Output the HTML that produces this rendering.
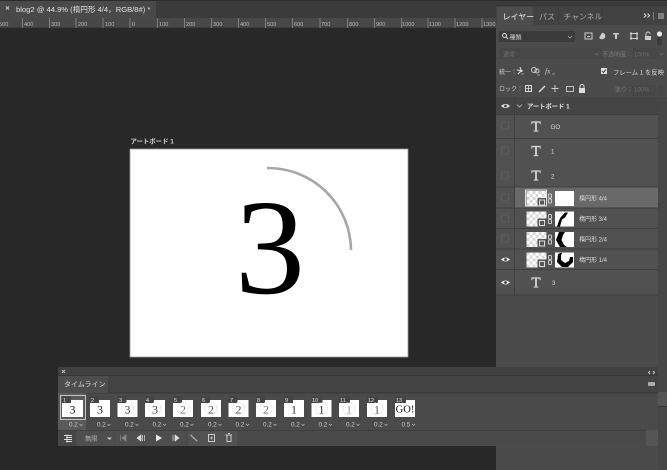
<!DOCTYPE html>
<html lang="ja">
<head>
<meta charset="utf-8">
<title>blog2</title>
<style>
html,body{margin:0;padding:0;width:667px;height:470px;overflow:hidden;background:#282828}
svg{display:block;filter:blur(.35px)}
text{font-family:"Liberation Sans","Noto Sans CJK JP",sans-serif}
</style>
</head>
<body>
<svg width="667" height="470" viewBox="0 0 667 470" xmlns="http://www.w3.org/2000/svg">
<defs>
<pattern id="ck" width="6" height="6" patternUnits="userSpaceOnUse">
<rect width="6" height="6" fill="#fff"/>
<rect width="3" height="3" fill="#d8d8d8"/>
<rect x="3" y="3" width="3" height="3" fill="#d8d8d8"/>
</pattern>
<g id="eye"><path d="M-4.5 0Q0 -4 4.5 0Q0 4 -4.5 0Z" fill="#e6e6e6"/><circle r="1.4" fill="#444"/></g>
<g id="T"><path d="M-4.500 -5H4.500V-2.500H3.700V-4H0.800V4.200H2.200V5H-2.200V4.200H-0.800V-4H-3.700V-2.500H-4.500Z" fill="#d4d4d4" stroke="#d4d4d4" stroke-width="0.3"/></g>
<g id="lt">
<rect x="0" y="0" width="20" height="15" fill="url(#ck)"/>
<rect x="11" y="7" width="9" height="9" fill="#555"/>
<rect x="13" y="9" width="5" height="5" fill="none" stroke="#ddd"/>
<rect x="22" y="3" width="3" height="4" rx="1" fill="none" stroke="#ccc"/>
<rect x="22" y="8" width="3" height="4" rx="1" fill="none" stroke="#ccc"/>
</g>
</defs>

<rect width="667" height="470" fill="#282828"/>

<!-- top tab bar -->
<rect y="0" width="667" height="1" fill="#2c2c2c"/>
<rect y="1" width="667" height="17" fill="#3b3b3b"/>
<rect x="0" y="1" width="156" height="17" fill="#494949"/>
<path d="M6 6.500l3 3m0-3l-3 3" stroke="#bbb" stroke-width="1.200"/>
<text x="16" y="12" font-size="7.600" fill="#e2e2e2">blog2 @ 44.9% (楕円形 4/4，RGB/8#) *</text>

<!-- ruler -->
<rect y="18" width="667" height="10" fill="#484848"/>
<rect y="27.500" width="667" height="0.700" fill="#303030"/>
<g stroke="#8c8c8c" stroke-width="0.800">
<path d="M22.500 18V28M49.500 18V28M76 18V28M103 18V28M130 18V28M157.500 18V28M184.500 18V28M211.500 18V28M238.500 18V28M265.500 18V28M292.500 18V28M320 18V28M347.500 18V28M374.500 18V28M401.500 18V28M428 18V28M455 18V28M482 18V28"/>
</g>
<g font-size="5.600" fill="#b8b8b8">
<text x="-1" y="26">500</text><text x="24" y="26">400</text><text x="51" y="26">300</text><text x="78" y="26">200</text><text x="105" y="26">100</text><text x="132" y="26">0</text><text x="159" y="26">100</text><text x="186" y="26">200</text><text x="213" y="26">300</text><text x="240" y="26">400</text><text x="267" y="26">500</text><text x="294" y="26">600</text><text x="321" y="26">700</text><text x="349" y="26">800</text><text x="376" y="26">900</text><text x="402" y="26">1000</text><text x="429" y="26">1100</text><text x="456" y="26">1200</text><text x="483" y="26">1300</text>
</g>

<!-- artboard -->
<text x="130.500" y="143.500" font-size="6.400" font-weight="bold" fill="#d6d6d6">アートボード 1</text>
<rect x="130" y="149" width="278" height="208" fill="#fff" stroke="#9a9a9a" stroke-width="0.800"/>
<text x="270" y="293" text-anchor="middle" font-size="136" fill="#000" style="font-family:'Liberation Serif',serif" transform="translate(270 0) scale(1.030 1) translate(-270 0)">3</text>
<path d="M267 168A83 83 0 0 1 351 250" fill="none" stroke="#a6a6a6" stroke-width="2.600"/>

<!-- right panel -->
<rect x="496" y="5" width="171" height="465" fill="#4b4b4b"/>
<rect x="496" y="5" width="171" height="1" fill="#343434"/>
<rect x="496" y="6" width="171" height="19" fill="#424242"/>
<rect x="497" y="7" width="36" height="18" fill="#4d4d4d"/>
<path d="M558.500 8V25M602 8V25" stroke="#383838" stroke-width="0.800"/>
<text x="502.500" y="19.500" font-size="8" fill="#ececec">レイヤー</text>
<text x="539" y="19.500" font-size="8" fill="#a8a8a8">パス</text>
<text x="563.500" y="19.500" font-size="7.800" fill="#a8a8a8">チャンネル</text>
<path d="M644 13.500l2 2-2 2M647.500 13.500l2 2-2 2" fill="none" stroke="#ddd" stroke-width="1"/>
<path d="M653.500 12V20" stroke="#8c8c8c" stroke-width="0.800"/>
<path d="M658 14H664M658 16H664M658 18H664" stroke="#bbb" stroke-width="1"/>

<!-- search row -->
<rect x="499" y="31" width="76" height="11" rx="1" fill="#3b3b3b"/>
<circle cx="504.500" cy="35.500" r="2" fill="none" stroke="#ddd" stroke-width="1"/>
<path d="M506 37l2 2" stroke="#ddd" stroke-width="1"/>
<text x="509.500" y="39.500" font-size="6" fill="#cfcfcf">種類</text>
<path d="M568 36l2 2 2-2" fill="none" stroke="#aaa" stroke-width="0.800"/>
<rect x="585" y="33" width="7" height="6" fill="none" stroke="#ccc" stroke-width="1"/>
<path d="M587 36.500H590" stroke="#ccc"/>
<circle cx="602" cy="36" r="3.300" fill="#ccc"/>
<path d="M602 32.700A3.300 3.300 0 0 0 599 38Z" fill="#4b4b4b"/>
<path d="M613 33H619V34.500H617V39H615V34.500H613Z" fill="#ccc"/>
<rect x="631" y="33.500" width="6" height="5" fill="none" stroke="#ccc"/>
<path d="M630 32.500h2v2h-2zM636 32.500h2v2h-2zM630 37.500h2v2h-2zM636 37.500h2v2h-2z" fill="#ccc"/>
<rect x="645" y="36" width="6" height="4" fill="#ccc"/>
<path d="M646 36v-2a2 2 0 0 1 4 0" fill="none" stroke="#ccc"/>
<rect x="657" y="36" width="5" height="9" rx="2.500" fill="#3a3a3a"/>
<circle cx="659.500" cy="34" r="2.600" fill="#e8e8e8"/>

<!-- blend row -->
<rect x="499" y="48" width="104" height="11" fill="#474747"/>
<text x="503" y="56.500" font-size="6" fill="#6e6e6e">通常</text>
<path d="M594.500 53l2 2 2-2" fill="none" stroke="#6e6e6e" stroke-width="0.800"/>
<text x="602" y="56.500" font-size="6" fill="#787878">不透明度：</text>
<rect x="633" y="48" width="24" height="11" fill="#474747"/>
<text x="634" y="56.500" font-size="6" fill="#6e6e6e">100%</text>
<rect x="658" y="48" width="7" height="11" fill="#474747"/>
<path d="M659.500 53l2 2 2-2" fill="none" stroke="#6e6e6e" stroke-width="0.800"/>

<!-- unify row -->
<text x="499" y="74" font-size="6" fill="#cfcfcf">統一：</text>
<path d="M518 74l4-4M520 67l1.500 5M517 70l6 1" stroke="#ddd" stroke-width="1.100" fill="none"/>
<circle cx="534" cy="70" r="2.500" fill="none" stroke="#ccc"/>
<circle cx="537" cy="71" r="2" fill="none" stroke="#ccc"/>
<text x="545" y="73.500" font-size="7.500" font-style="italic" fill="#ccc" style="font-family:'Liberation Serif',serif">fx</text>
<path d="M521 74h3M537 75h3M552 74h3" stroke="#aaa" stroke-width="0.800"/>
<rect x="601" y="68" width="6" height="6" fill="#e0e0e0"/>
<path d="M602 71l1.500 1.500 2.500-3" fill="none" stroke="#444"/>
<text x="613" y="74.500" font-size="6.300" fill="#d8d8d8">フレーム 1 を反映</text>

<!-- lock row -->
<text x="499" y="91" font-size="6" fill="#cfcfcf">ロック：</text>
<rect x="525.500" y="85.500" width="6" height="6" fill="none" stroke="#ddd"/>
<path d="M525.500 88.500h6M528.500 85.500v6" stroke="#ddd" stroke-width="0.800"/>
<path d="M539 92l6-6" stroke="#ddd" stroke-width="1.400"/>
<path d="M555 85v7M551.500 88.500h7" stroke="#ccc" stroke-width="1"/>
<rect x="566.500" y="86.500" width="7" height="5" fill="none" stroke="#ccc" stroke-width="0.900"/>
<rect x="579" y="88" width="6" height="5" fill="#ddd"/>
<path d="M580 88v-1.500a2 2 0 0 1 4 0V88" fill="none" stroke="#ddd"/>
<text x="615" y="91.500" font-size="6" fill="#787878">塗り：</text>
<rect x="632" y="85" width="24" height="11" fill="#474747"/>
<text x="634" y="91.500" font-size="6" fill="#6e6e6e">100%</text>
<rect x="658" y="85" width="7" height="11" fill="#474747"/>

<!-- layers list -->
<rect x="496" y="97" width="162" height="198" fill="#515151"/>
<rect x="658" y="97" width="9" height="373" fill="#464646"/>
<rect x="658" y="392" width="9" height="14" fill="#555"/>
<path d="M658 406.500H667" stroke="#333" stroke-width="0.800"/>
<rect x="496" y="97" width="162" height="17" fill="#454545"/>
<rect x="515" y="187" width="143" height="21" fill="#696969"/>
<use href="#eye" x="505.500" y="106"/>
<path d="M517 104.500l2.500 2.500 2.500-2.500" fill="none" stroke="#bbb" stroke-width="0.800"/>
<text x="527" y="108.500" font-size="6.300" font-weight="bold" fill="#e4e4e4">アートボード 1</text>
<g stroke="#3f3f3f" stroke-width="0.900">
<path d="M496 114.500H658M496 138.500H658M496 187H658M496 208H658M496 228.500H658M496 249H658M496 269.500H658M496 295H658"/>
<path d="M514.500 97V295"/>
</g>
<g fill="none" stroke="#5f5f5f" stroke-width="0.800">
<rect x="501.500" y="122" width="7" height="7"/>
<rect x="501.500" y="147" width="7" height="7"/>
<rect x="501.500" y="172" width="7" height="7"/>
<rect x="501.500" y="194" width="7" height="7"/>
<rect x="501.500" y="215" width="7" height="7"/>
<rect x="501.500" y="235" width="7" height="7"/>
</g>
<use href="#T" x="536" y="126.500"/>
<use href="#T" x="536" y="151"/>
<use href="#T" x="536" y="175.500"/>
<use href="#T" x="536" y="282.500"/>
<g font-size="6.200" fill="#dcdcdc">
<text x="550.500" y="129">GO</text>
<text x="551" y="153.500">1</text>
<text x="551" y="178.500">2</text>
<text x="552" y="285">3</text>
</g>
<use href="#eye" x="505.500" y="259.500"/>
<use href="#eye" x="505.500" y="282.500"/>

<!-- mask thumbs -->
<use href="#lt" x="526.500" y="191"/>
<rect x="525.500" y="190" width="21" height="16" fill="none" stroke="#eee" stroke-width="0.900"/>
<use href="#lt" x="526.500" y="211.500"/>
<use href="#lt" x="526.500" y="232"/>
<use href="#lt" x="526.500" y="252.500"/>
<rect x="555" y="191" width="19" height="15" fill="#fff"/>
<rect x="555" y="211.500" width="19" height="15" fill="#fff"/>
<path d="M557 226.500l2-6 1.500-3 4.500-5 3 0-3 5-3 2-2 7Z" fill="#000"/>
<rect x="555" y="232" width="19" height="15" fill="#fff"/>
<path d="M559 232H565L563 235 561.500 240 564 245 567 247H560L556 240Z" fill="#000"/>
<rect x="555" y="252.500" width="19" height="15" fill="#fff"/>
<path d="M558 254L562 252.500 561 256 561 260 565 263 569 261 570 257 573 257 573 262 568 267H562L557 262Z" fill="#000"/>
<g font-size="6" fill="#dcdcdc">
<text x="579" y="200.500">楕円形 4/4</text>
<text x="579" y="221">楕円形 3/4</text>
<text x="579" y="241.500">楕円形 2/4</text>
<text x="579" y="262">楕円形 1/4</text>
</g>

<!-- timeline -->
<rect x="58" y="367" width="600" height="79" fill="#4a4a4a"/>
<rect x="58" y="367" width="600" height="8" fill="#404040"/>
<rect x="58" y="375" width="600" height="18" fill="#434343"/>
<path d="M58 375.500H658M58 393H658" stroke="#353535" stroke-width="0.800"/>
<rect x="58" y="376" width="50" height="17" fill="#4d4d4d"/>
<path d="M62 370l3 3m0-3l-3 3" stroke="#bbb" stroke-width="1"/>
<text x="64" y="386.500" font-size="7" fill="#dcdcdc">タイムライン</text>
<path d="M650 371l-1.500 1.500 1.500 1.500M653 371l1.500 1.500-1.500 1.500" fill="none" stroke="#ccc" stroke-width="0.900"/>
<rect x="648" y="382" width="7" height="4" rx="1" fill="#aaa"/>
<rect x="646" y="430" width="12" height="16" fill="#555"/>
<rect x="58" y="393" width="28" height="37" fill="#5a5a5a"/>
<path d="M58 430.500H646" stroke="#3c3c3c" stroke-width="0.800"/>
<rect x="60.500" y="395.500" width="25" height="24" fill="none" stroke="#e0e0e0" stroke-width="0.800"/>

<!-- frames -->
<g fill="#fff">
<rect x="62" y="400" width="21" height="17"/><rect x="90" y="400" width="20" height="17"/><rect x="117.500" y="400" width="20" height="17"/><rect x="145" y="400" width="20" height="17"/><rect x="173" y="400" width="20" height="17"/><rect x="201" y="400" width="20" height="17"/><rect x="228.500" y="400" width="20" height="17"/><rect x="256" y="400" width="20" height="17"/><rect x="284" y="400" width="20" height="17"/><rect x="311.500" y="400" width="20" height="17"/><rect x="339" y="400" width="20" height="17"/><rect x="367" y="400" width="20" height="17"/><rect x="395" y="400" width="20" height="17"/>
</g>
<g fill="#444">
<rect x="62" y="396" width="9" height="7"/><rect x="90" y="396" width="9" height="7"/><rect x="117.500" y="396" width="9" height="7"/><rect x="145" y="396" width="9" height="7"/><rect x="173" y="396" width="9" height="7"/><rect x="201" y="396" width="9" height="7"/><rect x="228.500" y="396" width="9" height="7"/><rect x="256" y="396" width="9" height="7"/><rect x="284" y="396" width="9" height="7"/><rect x="311.500" y="396" width="11" height="7"/><rect x="339" y="396" width="11" height="7"/><rect x="367" y="396" width="11" height="7"/><rect x="395" y="396" width="11" height="7"/>
</g>
<g font-size="5.500" fill="#e4e4e4">
<text x="63" y="402">1</text><text x="91" y="402">2</text><text x="119" y="402">3</text><text x="146" y="402">4</text><text x="174" y="402">5</text><text x="202" y="402">6</text><text x="230" y="402">7</text><text x="257" y="402">8</text><text x="285" y="402">9</text><text x="312" y="402">10</text><text x="340" y="402">11</text><text x="368" y="402">12</text><text x="396" y="402">13</text>
</g>
<g font-size="12" text-anchor="middle" style="font-family:'Liberation Serif',serif">
<text x="72.500" y="413.500" fill="#222" style="font-family:'Liberation Serif',serif">3</text>
<text x="100" y="413.500" fill="#222" style="font-family:'Liberation Serif',serif">3</text>
<text x="127.500" y="413.500" fill="#444" style="font-family:'Liberation Serif',serif">3</text>
<text x="155" y="413.500" fill="#444" style="font-family:'Liberation Serif',serif">3</text>
<text x="183" y="413.500" fill="#777" style="font-family:'Liberation Serif',serif">2</text>
<text x="211" y="413.500" fill="#555" style="font-family:'Liberation Serif',serif">2</text>
<text x="238.500" y="413.500" fill="#555" style="font-family:'Liberation Serif',serif">2</text>
<text x="266" y="413.500" fill="#777" style="font-family:'Liberation Serif',serif">2</text>
<text x="294" y="413.500" fill="#333" style="font-family:'Liberation Serif',serif">1</text>
<text x="321.500" y="413.500" fill="#333" style="font-family:'Liberation Serif',serif">1</text>
<text x="349" y="413.500" fill="#999" style="font-family:'Liberation Serif',serif">1</text>
<text x="377" y="413.500" fill="#555" style="font-family:'Liberation Serif',serif">1</text>
<text x="405" y="412.500" font-size="10.500" fill="#111" style="font-family:'Liberation Serif',serif">GO!</text>
</g>
<g fill="none" stroke="#c4c4c4" stroke-width="0.600" stroke-dasharray="1 1">
<circle cx="127.500" cy="408.500" r="6"/><circle cx="155" cy="408.500" r="6"/><circle cx="183" cy="408.500" r="6"/><circle cx="211" cy="408.500" r="6"/><circle cx="238.500" cy="408.500" r="6"/><circle cx="266" cy="408.500" r="6"/><circle cx="321.500" cy="408.500" r="6"/><circle cx="349" cy="408.500" r="6"/><circle cx="377" cy="408.500" r="6"/>
</g>
<g font-size="6.300" fill="#cfcfcf">
<text x="69" y="426.500">0.2</text><text x="97" y="426.500">0.2</text><text x="125" y="426.500">0.2</text><text x="152.500" y="426.500">0.2</text><text x="180" y="426.500">0.2</text><text x="208" y="426.500">0.2</text><text x="235.500" y="426.500">0.2</text><text x="263" y="426.500">0.2</text><text x="291" y="426.500">0.2</text><text x="318.500" y="426.500">0.2</text><text x="346" y="426.500">0.2</text><text x="374" y="426.500">0.2</text><text x="401.500" y="426.500">0.5</text>
</g>
<path d="M79.500 424l1.500 1.500 1.500-1.500M107.500 424l1.500 1.500 1.500-1.500M135.500 424l1.500 1.500 1.500-1.500M163 424l1.500 1.500 1.500-1.500M190.500 424l1.500 1.500 1.500-1.500M218.500 424l1.500 1.500 1.500-1.500M246 424l1.500 1.500 1.500-1.500M273.500 424l1.500 1.500 1.500-1.500M301.500 424l1.500 1.500 1.500-1.500M329 424l1.500 1.500 1.500-1.500M356.500 424l1.500 1.500 1.500-1.500M384.500 424l1.500 1.500 1.500-1.500M412 424l1.500 1.500 1.500-1.500" fill="none" stroke="#bbb" stroke-width="0.700"/>

<!-- timeline controls -->
<rect x="58" y="431" width="18" height="15" fill="#464646"/>
<rect x="77" y="431" width="37" height="15" fill="#4e4e4e"/>
<rect x="115" y="431" width="72" height="15" fill="#4e4e4e"/>
<rect x="188" y="431" width="49" height="15" fill="#525252"/>
<path d="M64 435.500H72M66 437.500H72M64 439.500H72M66 441.500H72M67 434.500V442.500" stroke="#ddd" stroke-width="0.900"/>
<text x="85" y="440.500" font-size="6.300" fill="#b4b4b4">無限</text>
<path d="M107 437.500h5l-2.500 2.500Z" fill="#ccc"/>
<path d="M120.500 435V441M126 435V441L122 438Z" fill="#888" stroke="#888" stroke-width="0.700"/>
<path d="M141 435V441L137 438ZM142.500 435V441M144.500 435V441" fill="#ddd" stroke="#ddd" stroke-width="0.700"/>
<path d="M156 434.500L162 438 156 441.500Z" fill="#e6e6e6"/>
<path d="M173 435V441M175 435V441L179 438Z" fill="#ddd" stroke="#ddd" stroke-width="0.700"/>
<path d="M190.500 435L197 441" stroke="#aaa" stroke-width="1.300"/>
<rect x="208.500" y="434.500" width="6" height="7" fill="none" stroke="#ccc"/>
<path d="M210 438h3M211.500 436.500v3" stroke="#ccc" stroke-width="0.800"/>
<path d="M225.500 435H232M227 435V441.500H231V435M228 433.500H230" fill="none" stroke="#ccc"/>
</svg>
</body>
</html>
